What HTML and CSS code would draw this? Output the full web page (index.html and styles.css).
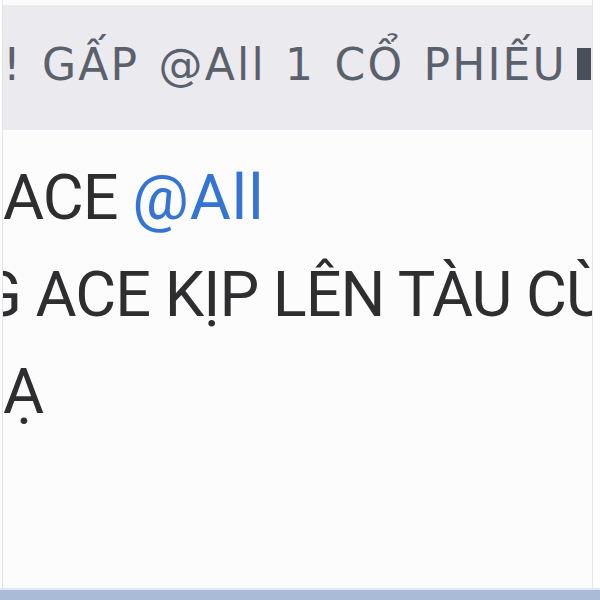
FILE: index.html
```html
<!DOCTYPE html>
<html lang="vi">
<head>
  <meta charset="UTF-8">
  <meta name="viewport" content="width=device-width, initial-scale=1.0">
  <title>Tin nhắn</title>
  <link rel="stylesheet" href="styles.css">
</head>
<body>
  <div class="card">
    <div class="reply-bar">
      <span class="reply-text">! GẤP @All 1 CỔ PHIẾU</span>
      <span class="reply-mark"></span>
    </div>

    <div class="message">
      <div class="line">ACE <span class="mention">@All</span></div>
      <div class="line line-cut">G ACE KỊP LÊN TÀU CÙNG</div>
      <div class="line">Ạ</div>
    </div>
  </div>

  <div class="footer-strip"></div>
</body>
</html>
```

FILE: styles.css
```css
:root {
  --bar-bg: #ebebef;
  --bar-text: #5a616d;
  --text-color: #2e2e30;
  --mention: #3474d4;
  --border-color: #e3e4e8;
  --strip: #a9bbd7;
}

* {
  box-sizing: border-box;
  margin: 0;
  padding: 0;
}

html, body {
  width: 600px;
  height: 600px;
  overflow: hidden;
}

body {
  font-family: Roboto, "Liberation Sans", sans-serif;
  background-color: #ffffff;
  display: flex;
  flex-direction: column;
}

.card {
  margin-left: 2px;
  width: 591px;
  height: 588px;
  padding-top: 5px;
  border-left: 1px solid var(--border-color);
  border-right: 1px solid var(--border-color);
  background-color: #fcfcfd;
  overflow: hidden;
}

.reply-bar {
  display: flex;
  align-items: baseline;
  height: 125px;
  line-height: 119px;
  padding-bottom: 6px;
  background-color: var(--bar-bg);
  color: var(--bar-text);
  font-family: "DejaVu Sans", Roboto, sans-serif;
  font-size: 44px;
  letter-spacing: 2.2px;
  word-spacing: 3px;
  white-space: nowrap;
  overflow: hidden;
}

.reply-text {
  flex-shrink: 0;
}

.reply-mark {
  flex-shrink: 0;
  display: inline-block;
  width: 14px;
  height: 32px;
  margin-left: 10px;
  background-color: #4a505a;
}

.message {
  padding-top: 19px;
  font-size: 63px;
  letter-spacing: -1px;
  line-height: 97px;
  color: var(--text-color);
  white-space: nowrap;
}

.mention {
  color: var(--mention);
  letter-spacing: 1px;
}

.line-cut {
  margin-left: -24px;
}

.footer-strip {
  height: 12px;
  border-top: 2px solid #dfe6ef;
  background-color: var(--strip);
}
```
